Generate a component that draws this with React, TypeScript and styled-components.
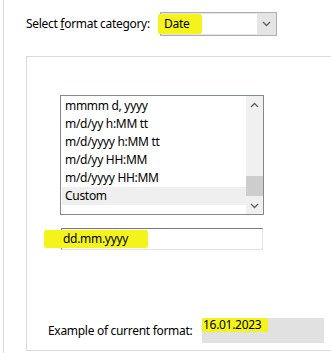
import styled, { createGlobalStyle } from 'styled-components';

const GlobalStyle = createGlobalStyle`
  html, body {
    margin: 0;
    padding: 0;
    background: #ffffff;
  }
  body {
    font-family: "Noto Sans", "Open Sans", "DejaVu Sans", sans-serif;
    font-size: 12px;
    letter-spacing: -0.3px;
    color: #000000;
  }
`;

const formats = [
  'mmmm d, yyyy',
  'm/d/yy h:MM tt',
  'm/d/yyyy h:MM tt',
  'm/d/yy HH:MM',
  'm/d/yyyy HH:MM',
  'Custom',
];

const Frame = styled.div`
  margin-left: 3px;
  width: 328px;
  height: 353px;
  border-left: 1px solid #dcdcdc;
  box-sizing: border-box;
  overflow: hidden;
`;

const Header = styled.div`
  display: flex;
  align-items: center;
  padding: 12px 0 0 22px;
`;

const Label = styled.span<{ $width: number }>`
  width: ${(p) => p.$width}px;
  flex: none;
  white-space: nowrap;
  line-height: 16px;
`;

const Combo = styled.div`
  display: flex;
  width: 117px;
  height: 24px;
  box-sizing: border-box;
  border: 1px solid #adadad;
  background: #e5e5e5;
`;

const ComboValue = styled.div`
  flex: 1;
  margin: 1px 0 1px 1px;
  background: #ffffff;
  line-height: 20px;
`;

const ComboButton = styled.div`
  width: 19px;
  display: flex;
  align-items: center;
  justify-content: center;
`;

/* highlighter stroke: sticks out $out px left of the text, text sits $pad px inside */
const Mark = styled.span<{ $out: number; $pad: number; $width: number; $height: number }>`
  display: inline-block;
  vertical-align: top;
  box-sizing: border-box;
  margin-left: -${(p) => p.$out}px;
  padding-left: ${(p) => p.$out + p.$pad}px;
  width: ${(p) => p.$width}px;
  height: ${(p) => p.$height}px;
  line-height: ${(p) => p.$height}px;
  background: #f4f41c;
  border-radius: 2px;
  white-space: nowrap;
`;

const Panel = styled.div`
  margin: 20px 0 0 22px;
  height: 295px;
  box-sizing: border-box;
  border: 1px solid #dadada;
  border-right: none;
  padding: 38px 0 0 21px;
  display: flex;
  flex-direction: column;
`;

const ListBox = styled.div`
  display: flex;
  margin-left: 12px;
  width: 204px;
  height: 120px;
  box-sizing: border-box;
  border: 1px solid #828790;
`;

const Items = styled.ul`
  flex: 1;
  list-style: none;
  margin: 0;
  padding: 1px 0 0 1px;
`;

const Item = styled.li<{ $selected?: boolean }>`
  height: 18px;
  line-height: 18px;
  padding-left: 3px;
  background: ${(p) => (p.$selected ? '#efefef' : 'transparent')};
  white-space: nowrap;
`;

const ScrollBar = styled.div`
  width: 17px;
  display: flex;
  flex-direction: column;
  background: #f0f0f0;
`;

const ScrollArrow = styled.div`
  height: 17px;
  display: flex;
  align-items: center;
  justify-content: center;
`;

const Track = styled.div`
  flex: 1;
  display: flex;
  flex-direction: column;
  justify-content: flex-end;
  padding-bottom: 1px;
`;

const Thumb = styled.div`
  height: 20px;
  background: #cdcdcd;
`;

const FormatInput = styled.div`
  margin: 13px 0 0 13px;
  width: 202px;
  height: 22px;
  padding-top: 1px;
  box-sizing: border-box;
  border-style: solid;
  border-width: 1px;
  border-color: #7a7a7a #e3e3e3 #e3e3e3 #7a7a7a;
`;

const ExampleRow = styled.div`
  display: flex;
  align-items: center;
  margin-top: 68px;
`;

const ExampleBox = styled.div`
  width: 122px;
  height: 25px;
  background: #e1e1e1;
`;

const Chevron = ({ up }: { up?: boolean }) => (
  <svg width="9" height="6" viewBox="0 0 9 6">
    <path
      d={up ? 'M1 5 L4.5 1.5 L8 5' : 'M1 1 L4.5 4.5 L8 1'}
      fill="none"
      stroke="#606060"
      strokeWidth="1.3"
    />
  </svg>
);

export default function App() {
  return (
    <>
      <GlobalStyle />
      <Frame>
        <Header>
          <Label $width={134}>
            Select <u>f</u>ormat category:
          </Label>
          <Combo>
            <ComboValue>
              <Mark $out={4} $pad={2} $width={44} $height={20}>Date</Mark>
            </ComboValue>
            <ComboButton>
              <Chevron />
            </ComboButton>
          </Combo>
        </Header>
        <Panel>
          <ListBox>
            <Items>
              {formats.map((f) => (
                <Item key={f} $selected={f === 'Custom'}>
                  {f}
                </Item>
              ))}
            </Items>
            <ScrollBar>
              <ScrollArrow>
                <Chevron up />
              </ScrollArrow>
              <Track>
                <Thumb />
              </Track>
              <ScrollArrow>
                <Chevron />
              </ScrollArrow>
            </ScrollBar>
          </ListBox>
          <FormatInput>
            <Mark $out={18} $pad={1} $width={104} $height={18}>dd.mm.yyyy</Mark>
          </FormatInput>
          <ExampleRow>
            <Label $width={154}>Example of current format:</Label>
            <ExampleBox>
              <Mark $out={0} $pad={1} $width={66} $height={14}>16.01.2023</Mark>
            </ExampleBox>
          </ExampleRow>
        </Panel>
      </Frame>
    </>
  );
}
